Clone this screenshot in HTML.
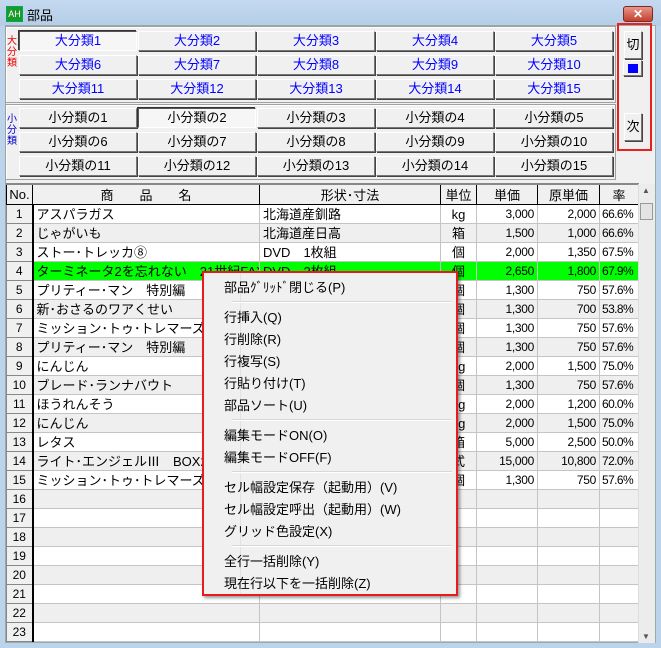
<!DOCTYPE html>
<html><head><meta charset="utf-8"><style>
*{box-sizing:border-box;margin:0;padding:0}
body{width:661px;height:648px;overflow:hidden;background:#bcd3ec;font-family:"Liberation Sans","Noto Sans CJK JP",sans-serif;font-size:13px;position:relative}
.a{position:absolute}
.title{left:0;top:0;width:661px;height:26px;background:linear-gradient(#c4d9ef,#b5cde8)}
.win{left:5px;top:25px;width:651px;height:618px;background:#f0f0f0;border:1px solid #9aa;}
.btn{position:absolute;height:20px;background:#f0f0f0;border:1px solid;border-color:#fff #777 #777 #fff;box-shadow:1px 1px 0 #444;color:#00f;text-align:center;line-height:18px;font-size:13px}
.sb{color:#000}
.pressed{border-color:#555 #fff #fff #555;box-shadow:-1px -1px 0 #333;background:#f6f6f6}
.grp{border:1px solid #a0a0a0;box-shadow:inset 1px 1px 0 #fff}
table{border-collapse:collapse;table-layout:fixed;position:absolute;left:6px;top:183px;width:632px;background:#fff}
td{height:19px;border:1px solid #c4c4c4;padding:0 3px;white-space:nowrap;overflow:hidden;font-size:13px;line-height:17px}
tr.e td{background:#efefef}
th{height:20px;border:1px solid #000;border-top:2px solid #888;font-weight:normal;background:#f0f0f0;font-size:13px;overflow:hidden;white-space:nowrap}
td.n{background:#f0f0f0!important;border:1px solid #888;border-right:2px solid #000;text-align:center;padding:0;font-size:12px}
td.r{text-align:right;font-size:12px;letter-spacing:-0.3px}
td.p{font-size:12px;letter-spacing:-0.6px;padding:0 2px}
td.c{text-align:center;padding:0}
tr.g td{background:#00ff00}
.menu{left:202px;top:271px;width:256px;height:325px;border:2px solid #e81c1c;background:#f0f0f0;box-shadow:2px 2px 3px rgba(0,0,0,.4)}
.mi{position:absolute;left:20px;font-size:13px;color:#000}
.sep{position:absolute;left:28px;right:4px;height:2px;border-top:1px solid #d8d8d8;border-bottom:1px solid #fff}
</style></head><body>
<div class="a title"></div>
<div class="a" style="left:6px;top:6px;width:17px;height:16px;background:#1a9a2a;border:1px solid #0a5;color:#fff;font-size:9px;line-height:14px;text-align:center">AH</div>
<div class="a" style="left:27px;top:5px;font-size:13px">部品</div>
<div class="a" style="left:623px;top:6px;width:30px;height:16px;border-radius:3px;background:linear-gradient(#e8968a,#c2402e);border:1px solid #7a2a20;color:#fff;font-size:12px;font-weight:bold;text-align:center;line-height:14px">✕</div>
<div class="a win"></div>
<div class="a grp" style="left:5px;top:26px;width:611px;height:77px"></div>
<div class="a grp" style="left:5px;top:104px;width:611px;height:76px"></div>
<div class="a" style="left:7px;top:36px;color:#e00;font-size:10px;line-height:11px;width:10px">大<br>分<br>類</div>
<div class="a" style="left:7px;top:114px;color:#00c;font-size:10px;line-height:11px;width:10px">小<br>分<br>類</div>

<div class="btn pressed" style="left:19px;top:31px;width:118px">大分類1</div>
<div class="btn" style="left:138px;top:31px;width:118px">大分類2</div>
<div class="btn" style="left:257px;top:31px;width:118px">大分類3</div>
<div class="btn" style="left:376px;top:31px;width:118px">大分類4</div>
<div class="btn" style="left:495px;top:31px;width:118px">大分類5</div>
<div class="btn" style="left:19px;top:55px;width:118px">大分類6</div>
<div class="btn" style="left:138px;top:55px;width:118px">大分類7</div>
<div class="btn" style="left:257px;top:55px;width:118px">大分類8</div>
<div class="btn" style="left:376px;top:55px;width:118px">大分類9</div>
<div class="btn" style="left:495px;top:55px;width:118px">大分類10</div>
<div class="btn" style="left:19px;top:79px;width:118px">大分類11</div>
<div class="btn" style="left:138px;top:79px;width:118px">大分類12</div>
<div class="btn" style="left:257px;top:79px;width:118px">大分類13</div>
<div class="btn" style="left:376px;top:79px;width:118px">大分類14</div>
<div class="btn" style="left:495px;top:79px;width:118px">大分類15</div>

<div class="btn sb" style="left:19px;top:108px;width:118px">小分類の1</div>
<div class="btn sb pressed" style="left:138px;top:108px;width:118px">小分類の2</div>
<div class="btn sb" style="left:257px;top:108px;width:118px">小分類の3</div>
<div class="btn sb" style="left:376px;top:108px;width:118px">小分類の4</div>
<div class="btn sb" style="left:495px;top:108px;width:118px">小分類の5</div>
<div class="btn sb" style="left:19px;top:132px;width:118px">小分類の6</div>
<div class="btn sb" style="left:138px;top:132px;width:118px">小分類の7</div>
<div class="btn sb" style="left:257px;top:132px;width:118px">小分類の8</div>
<div class="btn sb" style="left:376px;top:132px;width:118px">小分類の9</div>
<div class="btn sb" style="left:495px;top:132px;width:118px">小分類の10</div>
<div class="btn sb" style="left:19px;top:156px;width:118px">小分類の11</div>
<div class="btn sb" style="left:138px;top:156px;width:118px">小分類の12</div>
<div class="btn sb" style="left:257px;top:156px;width:118px">小分類の13</div>
<div class="btn sb" style="left:376px;top:156px;width:118px">小分類の14</div>
<div class="btn sb" style="left:495px;top:156px;width:118px">小分類の15</div>

<div class="a" style="left:617px;top:23px;width:35px;height:128px;border:2px solid #e82020"></div>
<div class="btn sb" style="left:624px;top:31px;width:18px;height:28px;line-height:26px">切</div>
<div class="btn sb" style="left:623px;top:60px;width:19px;height:16px"><div class="a" style="left:4px;top:3px;width:10px;height:9px;background:#00f"></div></div>
<div class="btn sb" style="left:624px;top:113px;width:18px;height:28px;line-height:26px">次</div>

<table>
<colgroup><col style="width:26px"><col style="width:227px"><col style="width:181px"><col style="width:36px"><col style="width:61px"><col style="width:62px"><col style="width:39px"></colgroup>
<tr><th>No.</th><th>商　　品　　名</th><th>形状･寸法</th><th>単位</th><th>単価</th><th>原単価</th><th>率</th></tr>
<tr><td class="n">1</td><td>アスパラガス</td><td>北海道産釧路</td><td class="c">kg</td><td class="r">3,000</td><td class="r">2,000</td><td class="p">66.6%</td></tr>
<tr class="e"><td class="n">2</td><td>じゃがいも</td><td>北海道産日高</td><td class="c">箱</td><td class="r">1,500</td><td class="r">1,000</td><td class="p">66.6%</td></tr>
<tr><td class="n">3</td><td>ストー･トレッカ⑧</td><td>DVD　1枚組</td><td class="c">個</td><td class="r">2,000</td><td class="r">1,350</td><td class="p">67.5%</td></tr>
<tr class="g"><td class="n">4</td><td>ターミネータ2を忘れない　21世紀FAX</td><td>DVD　2枚組</td><td class="c">個</td><td class="r">2,650</td><td class="r">1,800</td><td class="p">67.9%</td></tr>
<tr><td class="n">5</td><td>プリティー･マン　特別編</td><td></td><td class="c">個</td><td class="r">1,300</td><td class="r">750</td><td class="p">57.6%</td></tr>
<tr class="e"><td class="n">6</td><td>新･おさるのワアくせい</td><td></td><td class="c">個</td><td class="r">1,300</td><td class="r">700</td><td class="p">53.8%</td></tr>
<tr><td class="n">7</td><td>ミッション･トゥ･トレマーズ</td><td></td><td class="c">個</td><td class="r">1,300</td><td class="r">750</td><td class="p">57.6%</td></tr>
<tr class="e"><td class="n">8</td><td>プリティー･マン　特別編</td><td></td><td class="c">個</td><td class="r">1,300</td><td class="r">750</td><td class="p">57.6%</td></tr>
<tr><td class="n">9</td><td>にんじん</td><td></td><td class="c">kg</td><td class="r">2,000</td><td class="r">1,500</td><td class="p">75.0%</td></tr>
<tr class="e"><td class="n">10</td><td>ブレード･ランナバウト</td><td></td><td class="c">個</td><td class="r">1,300</td><td class="r">750</td><td class="p">57.6%</td></tr>
<tr><td class="n">11</td><td>ほうれんそう</td><td></td><td class="c">kg</td><td class="r">2,000</td><td class="r">1,200</td><td class="p">60.0%</td></tr>
<tr class="e"><td class="n">12</td><td>にんじん</td><td></td><td class="c">kg</td><td class="r">2,000</td><td class="r">1,500</td><td class="p">75.0%</td></tr>
<tr><td class="n">13</td><td>レタス</td><td></td><td class="c">箱</td><td class="r">5,000</td><td class="r">2,500</td><td class="p">50.0%</td></tr>
<tr class="e"><td class="n">14</td><td>ライト･エンジェルⅢ　BOX2</td><td></td><td class="c">式</td><td class="r">15,000</td><td class="r">10,800</td><td class="p">72.0%</td></tr>
<tr><td class="n">15</td><td>ミッション･トゥ･トレマーズ</td><td></td><td class="c">個</td><td class="r">1,300</td><td class="r">750</td><td class="p">57.6%</td></tr>
<tr class="e"><td class="n">16</td><td></td><td></td><td></td><td></td><td></td><td></td></tr>
<tr><td class="n">17</td><td></td><td></td><td></td><td></td><td></td><td></td></tr>
<tr class="e"><td class="n">18</td><td></td><td></td><td></td><td></td><td></td><td></td></tr>
<tr><td class="n">19</td><td></td><td></td><td></td><td></td><td></td><td></td></tr>
<tr class="e"><td class="n">20</td><td></td><td></td><td></td><td></td><td></td><td></td></tr>
<tr><td class="n">21</td><td></td><td></td><td></td><td></td><td></td><td></td></tr>
<tr class="e"><td class="n">22</td><td></td><td></td><td></td><td></td><td></td><td></td></tr>
<tr><td class="n">23</td><td></td><td></td><td></td><td></td><td></td><td></td></tr>
</table>
<div class="a" style="left:638px;top:184px;width:17px;height:459px;background:#ececec;border-left:1px solid #ddd"></div>
<div class="a" style="left:642px;top:186px;font-size:8px;color:#555">▲</div>
<div class="a" style="left:640px;top:203px;width:13px;height:17px;background:#e4e4e4;border:1px solid #999"></div>
<div class="a" style="left:642px;top:632px;font-size:8px;color:#555">▼</div>
<div class="a" style="left:0;top:643px;width:661px;height:5px;background:#bcd3ec"></div>

<div class="a menu">
<div class="a" style="left:36px;top:0;width:1px;height:100%;background:#e2e2e2"></div>
<div class="mi" style="top:4px">部品ｸﾞﾘｯﾄﾞ閉じる(P)</div>
<div class="sep" style="top:28px"></div>
<div class="mi" style="top:34px">行挿入(Q)</div>
<div class="mi" style="top:56px">行削除(R)</div>
<div class="mi" style="top:78px">行複写(S)</div>
<div class="mi" style="top:100px">行貼り付け(T)</div>
<div class="mi" style="top:122px">部品ソート(U)</div>
<div class="sep" style="top:146px"></div>
<div class="mi" style="top:152px">編集モードON(O)</div>
<div class="mi" style="top:174px">編集モードOFF(F)</div>
<div class="sep" style="top:198px"></div>
<div class="mi" style="top:204px">セル幅設定保存（起動用）(V)</div>
<div class="mi" style="top:226px">セル幅設定呼出（起動用）(W)</div>
<div class="mi" style="top:248px">グリッド色設定(X)</div>
<div class="sep" style="top:272px"></div>
<div class="mi" style="top:278px">全行一括削除(Y)</div>
<div class="mi" style="top:300px">現在行以下を一括削除(Z)</div>
</div>
</body></html>
